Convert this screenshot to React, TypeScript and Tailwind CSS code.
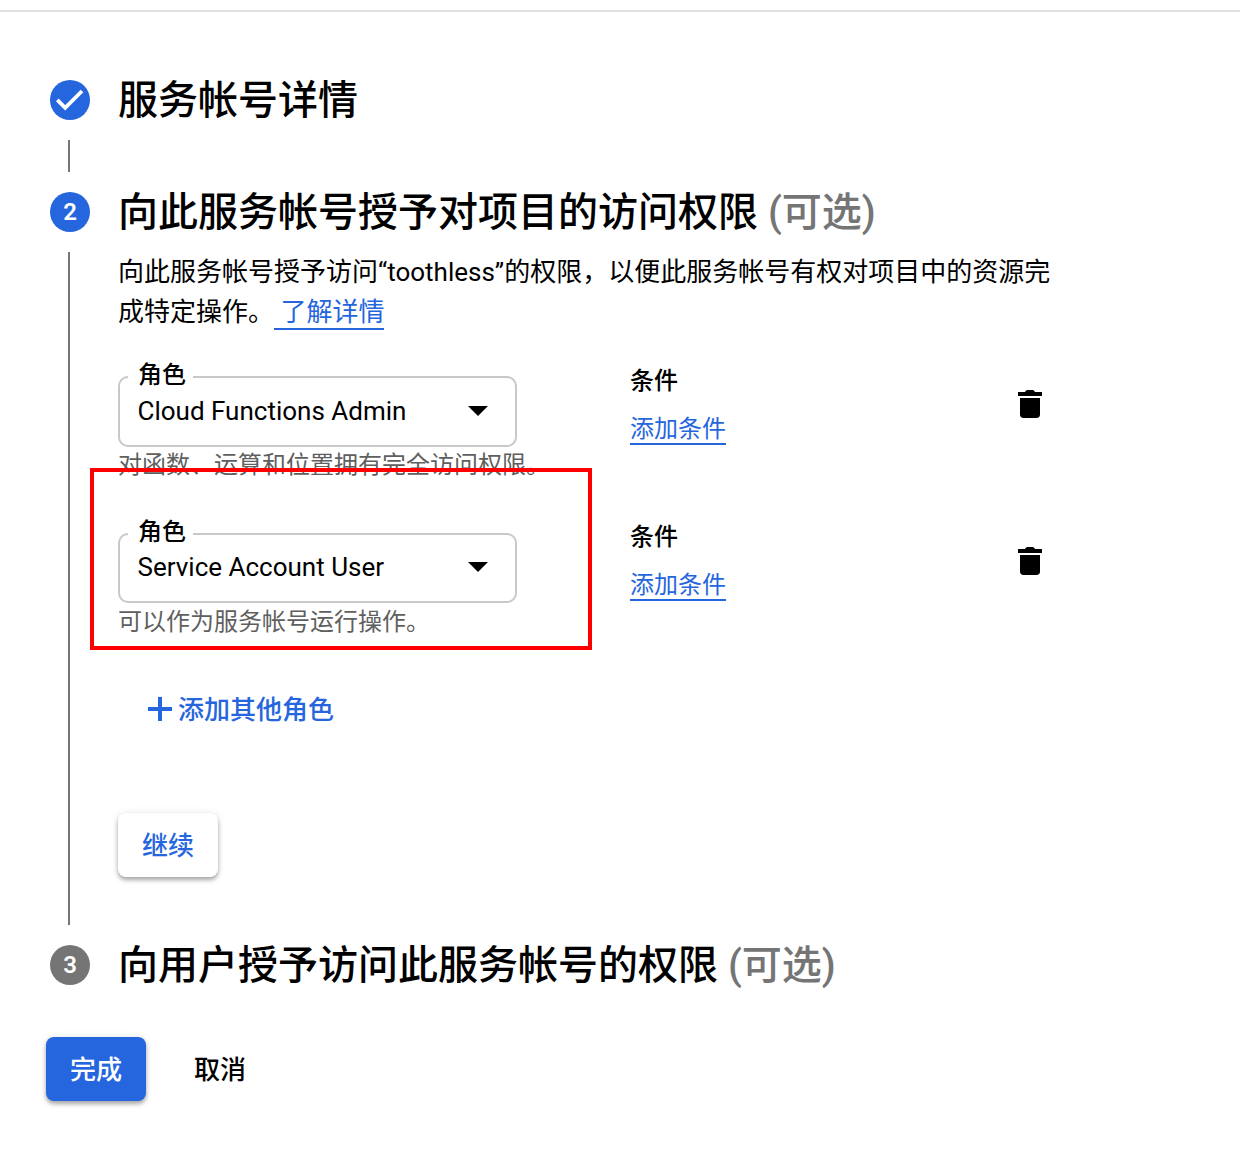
import type { ReactNode } from "react";

type Role = {
  name: string;
  hint: string;
  boxClass: string;
  valueClass: string;
  hintClass: string;
  conditionClass: string;
};

const roles: Role[] = [
  {
    name: "Cloud Functions Admin",
    hint: "对函数、运算和位置拥有完全访问权限。",
    boxClass: "h-[71px]",
    valueClass: "pb-px",
    hintClass: "",
    conditionClass: "-mt-[7px]",
  },
  {
    name: "Service Account User",
    hint: "可以作为服务帐号运行操作。",
    boxClass: "h-[70px]",
    valueClass: "pb-0.5",
    hintClass: "pt-px",
    conditionClass: "-mt-2",
  },
];

function CheckIcon() {
  return (
    <svg width="40" height="40" viewBox="0 0 40 40" fill="none">
      <path d="M7.300 19.900 15.200 27.800 32 11" stroke="white" strokeWidth="3.8" />
    </svg>
  );
}

function TrashIcon() {
  return (
    <svg width="24" height="28" viewBox="0 0 24 28" fill="black">
      <path d="M0 2h7c.5-1.300 1.300-2 2.600-2h4.800c1.300 0 2.100.7 2.600 2h7v4H0z" />
      <path d="M2 8h20v16.500c0 2.200-1.300 3.500-3.500 3.500h-13C3.300 28 2 26.700 2 24.500z" />
    </svg>
  );
}

function Step({
  marker,
  active,
  title,
  optional,
  line,
  children,
}: {
  marker: ReactNode;
  active?: boolean;
  title: string;
  optional?: boolean;
  line?: boolean;
  children?: ReactNode;
}) {
  return (
    <section className="flex gap-7">
      <div className="flex w-10 shrink-0 flex-col">
        <div
          className={
            active
              ? "flex h-10 w-10 items-center justify-center rounded-full bg-[#2566de] text-2xl font-semibold text-white"
              : "flex h-10 w-10 items-center justify-center rounded-full bg-[#757575] text-2xl font-semibold text-white"
          }
        >
          {marker}
        </div>
        {line && <div className="my-5 ml-[18px] min-h-8 w-0.5 grow bg-[#757575]" />}
      </div>
      <div className="min-w-0 grow">
        <h2 className="h-10 text-[40px] leading-[42px] font-medium whitespace-nowrap">
          {title}
          {optional && <span className="text-[#757575]"> (可选)</span>}
        </h2>
        {children}
      </div>
    </section>
  );
}

function RoleRow({ role }: { role: Role }) {
  return (
    <div className="flex h-[157px] items-start">
      <div className="w-[512px]">
        <div className={`relative w-[399px] rounded-[10px] border-2 border-[#c8c8c8] ${role.boxClass}`}>
          <span className="absolute -top-[18px] left-2 bg-white pr-[7px] pl-2.5 text-2xl leading-[30px] font-medium">
            角色
          </span>
          <div className={`flex h-full items-center justify-between pr-[27px] pl-[17.500px] ${role.valueClass}`}>
            <span className="text-[26px]">{role.name}</span>
            <svg width="20" height="10" viewBox="0 0 20 10">
              <path d="M0 0h20L10 10z" />
            </svg>
          </div>
        </div>
        <p className={`text-2xl leading-9 whitespace-nowrap text-[#5f5f5f] ${role.hintClass}`}>{role.hint}</p>
      </div>
      <div className={`w-[388px] ${role.conditionClass}`}>
        <div className="text-2xl leading-6 font-medium">条件</div>
        <a className="mt-6 inline-block border-b-2 border-[#2566de] pb-0.5 text-2xl leading-6 text-[#2566de]">
          添加条件
        </a>
      </div>
      <button className="mt-3.5">
        <TrashIcon />
      </button>
    </div>
  );
}

export default function App() {
  return (
    <div className="relative h-[1176px] w-[1240px] overflow-hidden bg-white pt-2.5 font-[Roboto,'Noto_Sans_CJK_SC',sans-serif] text-black">
      <div className="h-0.5 bg-[#e0e0e0]" />
      <main className="pt-[68px] pl-[50px]">
        <Step marker={<CheckIcon />} active title="服务帐号详情" line />
        <Step marker="2" active title="向此服务帐号授予对项目的访问权限" optional line>
          <div className="mt-5 h-[693px]">
            <p className="text-[26px] leading-10">
              向此服务帐号授予访问“toothless”的权限，以便此服务帐号有权对项目中的资源完
              <br />
              成特定操作。
              <a className="inline-block h-[38px] border-b-2 border-[#2566de] whitespace-pre text-[#2566de]"> 了解详情</a>
            </p>
            <div className="mt-11">
              {roles.map((role) => (
                <RoleRow key={role.name} role={role} />
              ))}
            </div>
            <button className="mt-[3px] ml-[30px] flex h-8 items-center gap-1.5 text-[26px] font-medium text-[#2566de]">
              <svg width="24" height="24" viewBox="0 0 24 24" fill="currentColor">
                <path d="M10 0h4v10h10v4H14v10h-4V14H0v-4h10z" />
              </svg>
              <span className="pt-0.5">添加其他角色</span>
            </button>
            <button className="mt-[88px] h-16 w-[100px] rounded-lg bg-white pt-0.5 text-[26px] font-medium text-[#2566de] shadow-[0_3px_4px_rgba(0,0,0,0.32),0_0_8px_rgba(0,0,0,0.08)]">
              继续
            </button>
          </div>
        </Step>
        <Step marker="3" title="向用户授予访问此服务帐号的权限" optional />
        <div className="mt-[52px] -ml-1 flex">
          <button className="h-16 w-[100px] rounded-lg bg-[#2566de] pt-0.5 text-[26px] font-medium text-white shadow-[0_3px_4px_rgba(0,0,0,0.32),0_0_8px_rgba(0,0,0,0.08)]">
            完成
          </button>
          <button className="h-16 pt-0.5 pl-12 text-[26px] font-medium">取消</button>
        </div>
      </main>
      <div className="pointer-events-none absolute top-[468px] left-[90px] h-[182px] w-[502px] border-4 border-[#ff0000]" />
    </div>
  );
}
